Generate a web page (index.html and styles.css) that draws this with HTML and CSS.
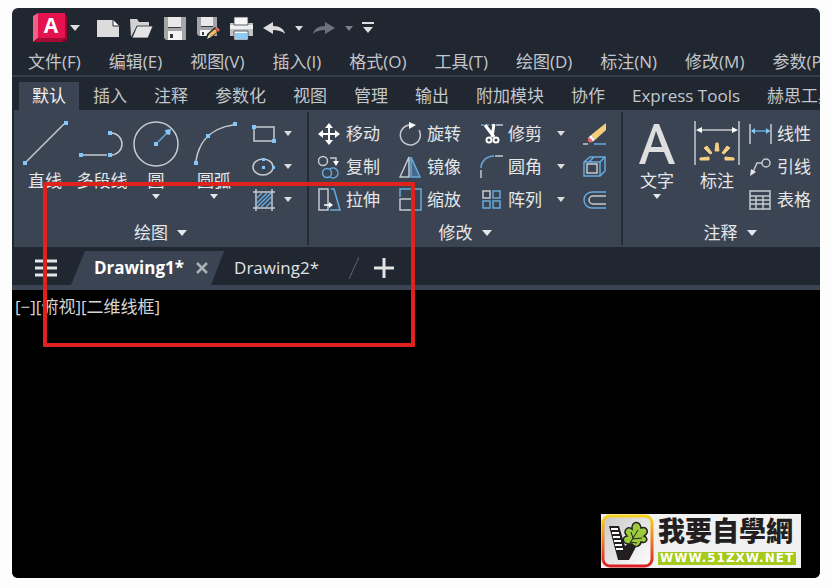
FILE: index.html
```html
<!DOCTYPE html>
<html lang="zh-CN">
<head>
<meta charset="utf-8">
<title>Drawing1</title>
<link rel="stylesheet" href="styles.css">
</head>
<body>
<main class="window">
  <header class="quick">
    <button class="app" aria-label="应用程序菜单">
      <svg width="36" height="32" viewBox="0 0 36 32"><path d="M5 26h29l1 3-3 1H7z" fill="#7d0426"/><path d="M32 2l3 2v25l-3-3z" fill="#96062f"/><path d="M1 4l5-3v25l-5 4z" fill="#ee6285"/><path d="M6 1h27v25H6z" fill="#e4124e"/><path d="M1 30l5-4h27l-3 4z" fill="#a50a36"/></svg>
      <span class="app-letter">A</span>
    </button>
    <button class="caret big" aria-label="展开"></button>
    <div class="tools">
      <button aria-label="新建"><svg width="24" height="24" viewBox="0 0 24 24"><path d="M0 4h16l6 6v11H0z" fill="#dcdcdc"/><path d="M16 4v6h6" fill="#fff" stroke="#20262f" stroke-width="1"/></svg></button>
      <button aria-label="打开"><svg width="24" height="24" viewBox="0 0 24 24"><path d="M0 3h7l2 3h10v4H7L1 21z" fill="#d2d2d2"/><path d="M7 10h16l-5 12H2z" fill="#e4e4e4" stroke="#20262f" stroke-width=".8"/></svg></button>
      <button aria-label="保存"><svg width="24" height="24" viewBox="0 0 24 24"><path d="M1 1h22v23H3l-2-2z" fill="#a5a5a5"/><path d="M5 1h13v10H5z" fill="#e9e9e9"/><path d="M5 15h14v9H5z" fill="#f4f4f4"/><path d="M7 18h3v4H7zM5 11h13v1H5z" fill="#333a44"/></svg></button>
      <button aria-label="另存为"><svg width="24" height="24" viewBox="0 0 24 24"><path d="M1 1h20v19H3l-2-2z" fill="#a5a5a5"/><path d="M5 1h12v9H5z" fill="#e9e9e9"/><path d="M4 14h12v6H4z" fill="#f4f4f4"/><path d="M6 16h2v3H6zM5 10h12v1H5z" fill="#333a44"/><path d="M10 24l1-6 8-7 4 4-8 7z" fill="#20262f"/><path d="M13 18l6-5 2 3-6 5z" fill="#f2bd61"/><path d="M19 13l2-2 3 3-2 2z" fill="#e9665a"/><path d="M11 23l2-5 2 3z" fill="#e8dfcf"/></svg></button>
      <button aria-label="打印"><svg width="24" height="24" viewBox="0 0 24 24"><path d="M1 7h23v13H1z" fill="#c3c3c3"/><path d="M1 9h23v4H1z" fill="#efefef"/><path d="M5 1h14v8H5z" fill="#f7f7f7" stroke="#333a44" stroke-width=".8"/><path d="M5 15h14v9H5z" fill="#fff" stroke="#333a44" stroke-width=".8"/><path d="M6 17h12v6H6z" fill="#8ccaf7"/></svg></button>
    </div>
    <div class="history">
      <button aria-label="撤销"><svg width="24" height="24" viewBox="0 0 24 24"><path d="M1 12l10-6v4c7 0 11 3 12 8-3-3-7-4-12-4v4z" fill="#dcdcdc"/></svg></button>
      <button class="caret" aria-label="撤销列表"></button>
      <button aria-label="重做"><svg width="24" height="24" viewBox="0 0 24 24"><path d="M23 12L13 6v4C6 10 2 13 1 18c3-3 7-4 12-4v4z" fill="#6c727b"/></svg></button>
      <button class="caret dim" aria-label="重做列表"></button>
      <button aria-label="自定义"><svg width="12" height="24" viewBox="0 0 12 24"><path d="M0 6h12v2H0zM1 11h10l-5 6z" fill="#dcdcdc"/></svg></button>
    </div>
  </header>
  <nav class="menus">
    <a href="#">文件(F)</a><a href="#">编辑(E)</a><a href="#">视图(V)</a><a href="#">插入(I)</a><a href="#">格式(O)</a><a href="#">工具(T)</a><a href="#">绘图(D)</a><a href="#">标注(N)</a><a href="#">修改(M)</a><a href="#">参数(P)</a>
  </nav>
  <nav class="tabs">
    <a href="#" class="on">默认</a><a href="#">插入</a><a href="#">注释</a><a href="#">参数化</a><a href="#">视图</a><a href="#">管理</a><a href="#">输出</a><a href="#">附加模块</a><a href="#">协作</a><a href="#">Express Tools</a><a href="#">赫思工具</a>
  </nav>
  <section class="ribbon">
    <div class="panel draw">
      <div class="body">
        <button class="large"><svg width="48" height="52" viewBox="0 0 48 52"><path d="M5 45L43 7" class="w"/><path d="M2 44h4v4H2zM43 4h4v4h-4z" class="p"/></svg>直线</button>
        <button class="large"><svg width="48" height="52" viewBox="0 0 48 52"><path d="M5 38h24M33 16a11 11 0 0 1 0 22" class="w"/><path d="M1 36h4v4H1zM30 36h4v4h-4zM30 14h4v4h-4z" class="p"/></svg>多段线</button>
        <button class="large"><svg width="48" height="52" viewBox="0 0 48 52"><circle cx="24" cy="27" r="22" class="w"/><path d="M26 25l9-9" class="b"/><path d="M22 25h4v4h-4zM33 13l6-1-1 6-4-1z" class="p"/></svg>圆<i class="arrow"></i></button>
        <button class="large"><svg width="48" height="52" viewBox="0 0 48 52"><path d="M6 44C8 30 16 12 43 8" class="w"/><path d="M4 44h4v4H4zM16 17h4v4h-4zM43 5h4v4h-4z" class="p"/></svg>圆弧<i class="arrow"></i></button>
        <div class="stack">
          <div class="row"><button aria-label="矩形"><svg width="24" height="24" viewBox="0 0 24 24"><path d="M2 5h20v14H2z" class="w"/><path d="M0 3h4v4H0zM20 17h4v4h-4z" class="p"/></svg></button><button class="caret" aria-label="矩形选项"></button></div>
          <div class="row"><button aria-label="椭圆"><svg width="24" height="24" viewBox="0 0 24 24"><ellipse cx="11" cy="12" rx="10" ry="8" class="w"/><path d="M10 3h3v3h-3zM10 11h3v3h-3zM20 11h3v3h-3z" class="p"/></svg></button><button class="caret" aria-label="椭圆选项"></button></div>
          <div class="row"><button aria-label="图案填充"><svg width="24" height="24" viewBox="0 0 24 24"><path d="M5 10l5-5M5 15L15 5M5 19L19 5M9 19L19 9M14 19l5-5" class="b"/><path d="M1 4h22M1 20h22M4 1v22M20 1v22" class="w"/></svg></button><button class="caret" aria-label="填充选项"></button></div>
        </div>
      </div>
      <button class="title">绘图<i class="arrow wide"></i></button>
    </div>
    <div class="panel modify">
      <div class="body">
        <div class="stack">
          <button class="row"><svg width="24" height="24" viewBox="0 0 24 24"><path d="M11 4v16M4 12h15" stroke="#fff" stroke-width="2"/><path d="M11 1l4 5H7zM11 23l4-5H7zM0 12l5-4v8zM22 12l-5-4v8z" fill="#fff"/></svg>移动</button>
          <button class="row"><svg width="24" height="24" viewBox="0 0 24 24"><circle cx="5" cy="6" r="4.500" class="w"/><path d="M12 3h6v4" class="w"/><path d="M15 6h6l-3 5z" fill="#fff"/><circle cx="9" cy="18" r="4.500" class="b"/><path d="M12 14a5 5 0 1 1 0 8" class="b"/></svg>复制</button>
          <button class="row"><svg width="24" height="24" viewBox="0 0 24 24"><path d="M1 1h9v21H1z" class="w"/><path d="M13 1h3l6 21H12" class="b"/><path d="M6 17h6" stroke="#fff" stroke-width="1.500"/><path d="M11 14l4 3-4 3z" fill="#fff"/></svg>拉伸</button>
        </div>
        <div class="stack">
          <button class="row"><svg width="24" height="24" viewBox="0 0 24 24"><path d="M12 3a10 10 0 1 0 8 5" class="w"/><path d="M10 0l7 3-7 4z" fill="#fff"/></svg>旋转</button>
          <button class="row"><svg width="24" height="24" viewBox="0 0 24 24"><path d="M10 2v20H1z" class="w"/><path d="M12 2v20h9z" fill="#466b8a" class="b2"/></svg>镜像</button>
          <button class="row"><svg width="24" height="24" viewBox="0 0 24 24"><path d="M1 9V1h21v21h-7" class="b"/><path d="M1 11h12v11H1z" class="w"/></svg>缩放</button>
        </div>
        <div class="stack trim">
          <div class="row"><button class="row"><svg width="24" height="24" viewBox="0 0 24 24"><path d="M1 3h14" class="b" stroke-dasharray="3 2"/><path d="M16 3h7" class="w"/><path d="M5 3l9 12M14 2l-2 13" stroke="#fff" stroke-width="3"/><circle cx="9" cy="18" r="2.500" fill="none" stroke="#fff" stroke-width="2"/><circle cx="16" cy="18" r="2.500" fill="none" stroke="#fff" stroke-width="2"/></svg>修剪</button><button class="caret" aria-label="修剪选项"></button></div>
          <div class="row"><button class="row"><svg width="24" height="24" viewBox="0 0 24 24"><path d="M1 13C1 6 7 1 14 1" class="b"/><path d="M15 1h8M1 15v8" class="w"/></svg>圆角</button><button class="caret" aria-label="圆角选项"></button></div>
          <div class="row"><button class="row"><svg width="24" height="24" viewBox="0 0 24 24"><path d="M3 3h7v7H3z" class="w"/><path d="M13 3h7v7h-7zM3 13h7v7H3zM13 13h7v7h-7z" class="b"/></svg>阵列</button><button class="caret" aria-label="阵列选项"></button></div>
        </div>
        <div class="stack">
          <button class="row" aria-label="删除"><svg width="24" height="24" viewBox="0 0 24 24"><path d="M8 13L23 1v7L12 18z" fill="#f5cf7c"/><path d="M8 13l4 5-3 2-4-4z" fill="#fff"/><path d="M6 15l4 4c-2 3-6 1-5-2z" fill="#e8636b"/><path d="M0 22h5" class="w"/><path d="M11 22h12" class="b"/></svg></button>
          <button class="row" aria-label="分解"><svg width="24" height="24" viewBox="0 0 24 24"><path d="M1 7l6-5h15v14l-5 5H1zM1 7h16v14M17 7l5-5M6 7l5-5" class="b"/><path d="M4 9h10v9H4z" class="w"/></svg></button>
          <button class="row" aria-label="偏移"><svg width="24" height="24" viewBox="0 0 24 24"><path d="M23 4H9a8 8 0 0 0 0 16h14" class="b"/><path d="M23 8H10a4 4 0 0 0 0 8h13" class="w"/></svg></button>
        </div>
      </div>
      <button class="title">修改<i class="arrow wide"></i></button>
    </div>
    <div class="panel notes">
      <div class="body">
        <button class="large"><svg width="48" height="52" viewBox="0 0 48 52"><path d="M6 47L21 7h5l16 40h-6l-5-12H16l-4 12zM18 30h11l-6-16z" fill="#dedede"/></svg>文字<i class="arrow"></i></button>
        <button class="large"><svg width="48" height="52" viewBox="0 0 48 52"><path d="M2 4v44M46 4v44M5 13h38" class="w"/><path d="M3 13l6-3v6zM45 13l-6-3v6z" fill="#fff"/><path d="M22 34l1-8h2l1 8zM17 37l-6-6 3-2 5 7zM31 37l6-6-3-2-5 7zM16 40v3H7v-2zM32 40v3h9v-2z" fill="#f7cf85" stroke="#f7cf85"/></svg>标注</button>
        <div class="stack">
          <button class="row"><svg width="24" height="24" viewBox="0 0 24 24"><path d="M1 2v20M22 2v20" class="w"/><path d="M3 9h18" class="b"/><path d="M2 9l4-3v6zM21 9l-4-3v6z" class="p"/></svg>线性</button>
          <button class="row"><svg width="24" height="24" viewBox="0 0 24 24"><path d="M4 17l4-9h5" class="w"/><circle cx="17" cy="8" r="4" class="w"/><path d="M1 21l1-7 5 3z" fill="#e6e6e6"/></svg>引线</button>
          <button class="row"><svg width="24" height="24" viewBox="0 0 24 24"><path d="M1 3h20v18H1zM1 8h20M1 12h20M1 16h20M7 8v13M14 8v13" class="w"/></svg>表格</button>
        </div>
      </div>
      <button class="title">注释<i class="arrow wide"></i></button>
    </div>
  </section>
  <nav class="files">
    <button class="burger" aria-label="文件选项卡菜单"><svg width="24" height="20" viewBox="0 0 24 20"><path d="M0 3h22M0 10h22M0 17h22" stroke="#e4e4e4" stroke-width="3"/></svg></button>
    <div class="file on"><a href="#">Drawing1*</a><button aria-label="关闭"><svg width="12" height="12" viewBox="0 0 12 12"><path d="M1 1l10 10M11 1L1 11" stroke="#aab0b8" stroke-width="2.500"/></svg></button></div>
    <a href="#" class="file">Drawing2*</a>
    <svg class="slash" width="10" height="22" viewBox="0 0 10 22"><path d="M0 22L10 0" stroke="#5d6572" fill="none"/></svg>
    <button aria-label="新图形"><svg width="20" height="20" viewBox="0 0 20 20"><path d="M0 10h20M10 0v20" stroke="#e4e4e4" stroke-width="3"/></svg></button>
  </nav>
  <section class="canvas">[−][俯视][二维线框]</section>
  <div class="marker"></div>
  <aside class="brand">
    <svg width="54" height="54" viewBox="0 0 54 54"><defs><linearGradient id="rim" x1="0" y1="0" x2="0" y2="1"><stop offset="0" stop-color="#f7d51d"/><stop offset=".5" stop-color="#ee7a22"/><stop offset="1" stop-color="#dc1f26"/></linearGradient><linearGradient id="face" x1="0" y1="0" x2="1" y2="1"><stop offset="0" stop-color="#c9c9cb"/><stop offset="1" stop-color="#fff"/></linearGradient></defs><rect x="2" y="2" width="49" height="50" rx="7" fill="url(#face)" stroke="url(#rim)" stroke-width="3"/><path d="M8 12h10l6 20 4-3 8 2-8 15H17z" fill="#231f20"/><path d="M10 15h7M11 19h7M12 23h7M13 27h7M14 31h7M15 35h7" stroke="#fff" stroke-width="2"/><path d="M27 30c-6-1-6-7-1-8-5-5 1-11 5-7-1-8 8-9 9-1 6-2 9 4 3 8 5 2 3 8-3 6-1 5-6 6-9 2z" fill="#9bcb3c" stroke="#231f20" stroke-width="1.500"/><path d="M26 34l11-18M32 24l-2-6M31 25l10-1M29 28l7 1" fill="none" stroke="#231f20"/></svg>
    <div class="brand-text"><strong>我要自學網</strong><span>www.51zxw.net</span></div>
  </aside>
</main>
</body>
</html>
```
FILE: styles.css
```css
* { box-sizing: border-box; }
body {
  margin: 0;
  padding: 8px 11px 10px 12px;
  background: #fdfdfd;
  font: 17px/24px "Open Sans", "Noto Sans CJK SC", sans-serif;
  color: #c3c6ca;
}
a { color: inherit; text-decoration: none; white-space: nowrap; }
button {
  margin: 0; padding: 0; border: 0; background: none;
  color: inherit; font: inherit; white-space: nowrap;
}
svg { display: block; flex: none; }
.w { fill: none; stroke: #c6cad0; stroke-width: 1.5; }
.b { fill: none; stroke: #67a9dc; stroke-width: 1.5; }
.b2 { stroke: #67a9dc; stroke-width: 1.5; }
.p { fill: #84c6fa; }

.window {
  position: relative;
  display: flex;
  flex-direction: column;
  min-height: calc(100vh - 18px);
  overflow: hidden;
  border-radius: 6px;
  background: #212730;
}

.quick { display: flex; align-items: center; height: 40px; padding-left: 20px; }
.app { position: relative; }
.app-letter {
  position: absolute; inset: 1px 0 auto 2px;
  color: #fff; font-size: 21px; font-weight: 700; text-align: center;
}
.tools { display: flex; align-items: center; gap: 9px; margin-left: 15px; }
.history { display: flex; align-items: center; gap: 7px; margin-left: 9px; }
.caret { display: flex; justify-content: center; width: 12px; color: #dcdcdc; }
.caret::before, .arrow {
  content: ""; display: block;
  border: 4px solid transparent; border-top: 5px solid currentColor; border-bottom: 0;
}
.caret.big { width: 14px; }
.caret.big::before, .arrow.wide { border-width: 6px 5px 0; }
.caret.dim { color: #7b8189; }

.menus {
  display: flex; gap: 28px; height: 29px; padding: 2px 0 0 16px;
  border-bottom: 2px solid #343d49;
}
.tabs { display: flex; gap: 1px; padding: 5px 0 0 7px; }
.tabs a { padding: 2px 13px; }
.tabs .on { background: #3b4453; color: #f2f2f2; }

.ribbon {
  display: flex; margin-left: 2px; padding: 2px 0;
  background: #3b4453; color: #e6e7e9;
}
.panel { display: flex; flex: none; flex-direction: column; justify-content: space-between; height: 133px; }
.panel + .panel { border-left: 2px solid #252c37; }
.body { display: grid; padding-top: 5px; }
.draw { width: 293px; }
.draw .body { grid-template-columns: 62px 52px 56px 60px auto; }
.modify { width: 314px; }
.modify .body { grid-template-columns: 81px 81px 103px auto; padding-left: 9px; }
.notes { width: 216px; }
.notes .body { grid-template-columns: 56px 60px auto; padding-left: 6px; column-gap: 2px; }
.large { display: flex; flex-direction: column; align-items: center; }
.large .arrow { margin-top: 1px; }
.body > .large { align-self: start; }
.stack { display: grid; grid-auto-rows: 33px; }
.row { display: flex; align-items: center; gap: 4px; }
.draw .row { padding-left: 8px; gap: 6px; }
.trim div.row { gap: 13px; }
.title { display: flex; align-items: center; justify-content: center; gap: 9px; }

.files {
  display: flex; align-items: center; height: 43px; padding-top: 4px;
  border-bottom: 5px solid #3b4453; color: #e0e2e5;
}
.burger { padding-left: 23px; }
.file { display: flex; align-items: center; gap: 12px; }
.file.on {
  align-self: stretch; margin: 0 10px 0 12px; padding: 0 16px 0 23px;
  background: #3b4453; clip-path: polygon(14px 0, 100% 0, calc(100% - 13px) 100%, 0 100%);
  color: #fff; font-weight: 700;
}
.slash { margin: 0 15px 0 30px; }
.canvas { flex: 1; padding: 5px 3px; background: #000; color: #d5d5d5; }

.marker {
  position: absolute; left: 31px; top: 174px;
  width: 372px; height: 165px; border: 4px solid #e0221c; border-radius: 1px;
}
.brand {
  position: absolute; right: 19px; bottom: 10px;
  display: flex; width: 200px; height: 54px; background: #f1f1f2;
}
.brand-text { display: flex; flex: 1; flex-direction: column; justify-content: space-between; padding: 2px 5px 3px 3px; }
.brand strong { color: #231f20; font: 900 27px/28px "Noto Sans CJK TC", sans-serif; white-space: nowrap; }
.brand span {
  background: #a5ca1c; color: #fff; text-align: center; text-transform: uppercase;
  font: 700 12px/13px "DejaVu Sans", sans-serif; letter-spacing: 1px;
}
```
